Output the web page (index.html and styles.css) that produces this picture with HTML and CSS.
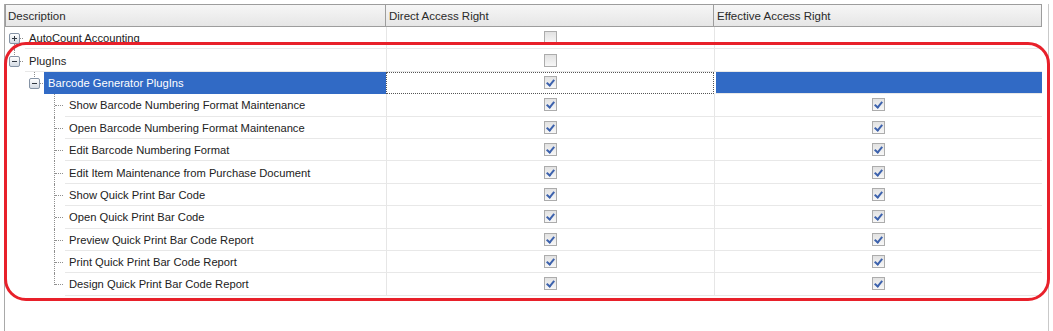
FILE: index.html
```html
<!DOCTYPE html>
<html lang="en">

<head>
  <meta charset="UTF-8">
  <title>Access Right</title>
  <link rel="stylesheet" href="styles.css">
</head>

<body>
  <div class="grid">
    <div class="head">
      <div class="hcell">Description</div>
      <div class="hcell">Direct Access Right</div>
      <div class="hcell">Effective Access Right</div>
    </div>

    <div class="row">
      <div class="desc">
        <span class="slot v-down h"><span class="exp plus"></span></span>
        <span class="label">AutoCount Accounting</span>
      </div>
      <div class="cell"><span class="chk"></span></div>
      <div class="cell"></div>
    </div>

    <div class="row">
      <div class="desc">
        <span class="slot v-up h"><span class="exp"></span></span>
        <span class="label">PlugIns</span>
      </div>
      <div class="cell"><span class="chk"></span></div>
      <div class="cell"></div>
    </div>

    <div class="row selected">
      <div class="desc">
        <span class="slot"></span>
        <span class="slot v-up h"><span class="exp"></span></span>
        <span class="label">Barcode Generator PlugIns</span>
      </div>
      <div class="cell focus"><span class="chk on"></span></div>
      <div class="cell"></div>
    </div>

    <div class="row">
      <div class="desc">
        <span class="slot"></span><span class="slot"></span>
        <span class="slot v-full h"></span>
        <span class="label">Show Barcode Numbering Format Maintenance</span>
      </div>
      <div class="cell"><span class="chk on"></span></div>
      <div class="cell"><span class="chk on"></span></div>
    </div>

    <div class="row">
      <div class="desc">
        <span class="slot"></span><span class="slot"></span>
        <span class="slot v-full h"></span>
        <span class="label">Open Barcode Numbering Format Maintenance</span>
      </div>
      <div class="cell"><span class="chk on"></span></div>
      <div class="cell"><span class="chk on"></span></div>
    </div>

    <div class="row">
      <div class="desc">
        <span class="slot"></span><span class="slot"></span>
        <span class="slot v-full h"></span>
        <span class="label">Edit Barcode Numbering Format</span>
      </div>
      <div class="cell"><span class="chk on"></span></div>
      <div class="cell"><span class="chk on"></span></div>
    </div>

    <div class="row">
      <div class="desc">
        <span class="slot"></span><span class="slot"></span>
        <span class="slot v-full h"></span>
        <span class="label">Edit Item Maintenance from Purchase Document</span>
      </div>
      <div class="cell"><span class="chk on"></span></div>
      <div class="cell"><span class="chk on"></span></div>
    </div>

    <div class="row">
      <div class="desc">
        <span class="slot"></span><span class="slot"></span>
        <span class="slot v-full h"></span>
        <span class="label">Show Quick Print Bar Code</span>
      </div>
      <div class="cell"><span class="chk on"></span></div>
      <div class="cell"><span class="chk on"></span></div>
    </div>

    <div class="row">
      <div class="desc">
        <span class="slot"></span><span class="slot"></span>
        <span class="slot v-full h"></span>
        <span class="label">Open Quick Print Bar Code</span>
      </div>
      <div class="cell"><span class="chk on"></span></div>
      <div class="cell"><span class="chk on"></span></div>
    </div>

    <div class="row">
      <div class="desc">
        <span class="slot"></span><span class="slot"></span>
        <span class="slot v-full h"></span>
        <span class="label">Preview Quick Print Bar Code Report</span>
      </div>
      <div class="cell"><span class="chk on"></span></div>
      <div class="cell"><span class="chk on"></span></div>
    </div>

    <div class="row">
      <div class="desc">
        <span class="slot"></span><span class="slot"></span>
        <span class="slot v-full h"></span>
        <span class="label">Print Quick Print Bar Code Report</span>
      </div>
      <div class="cell"><span class="chk on"></span></div>
      <div class="cell"><span class="chk on"></span></div>
    </div>

    <div class="row">
      <div class="desc">
        <span class="slot"></span><span class="slot"></span>
        <span class="slot v-up h"></span>
        <span class="label">Design Quick Print Bar Code Report</span>
      </div>
      <div class="cell"><span class="chk on"></span></div>
      <div class="cell"><span class="chk on"></span></div>
    </div>

    <div class="highlight"></div>
  </div>
</body>

</html>
```

FILE: styles.css
```css
html,
body {
  margin: 0;
  background-color: #ffffff;
}

body {
  padding: 4px 0 0 4px;
  font-family: 'Liberation Sans', Arial, sans-serif;
  font-size: 11.2px;
  color: #222222;
}

.grid {
  position: relative;
  width: 1040px;
  height: 327px;
  padding-right: 3px;
  border-left: 1px solid #a9a9a9;
  border-right: 1px solid #c9c9c9;
}

.head,
.row {
  display: grid;
  grid-template-columns: 381px 328px 328px;
}

.head {
  height: 23px;
}

.hcell {
  display: flex;
  align-items: center;
  padding-left: 3px;
  border: 1px solid #9d9d9d;
  border-left-width: 0;
  background: linear-gradient(#f6f6f6, #e6e6e6);
  color: #2a2a2a;
  font-size: 11.5px;
}

.hcell:first-child {
  padding-left: 2px;
  border-left-width: 1px;
}

.row {
  height: 22.4px;
}

.desc {
  display: flex;
  min-width: 0;
}

.label {
  flex: 1;
  display: flex;
  align-items: center;
  padding-left: 4px;
  padding-top: 1px;
  border-bottom: 1px solid #e8e8e8;
  white-space: nowrap;
}

.cell {
  display: flex;
  align-items: center;
  justify-content: center;
  border-left: 1px solid #e6e6e6;
  border-bottom: 1px solid #e8e8e8;
}

/* tree lines */
.slot {
  position: relative;
  flex: none;
  width: 20px;
}

.slot::before,
.slot::after {
  content: '';
  position: absolute;
  display: none;
}

.slot.v-down::before,
.slot.v-up::before,
.slot.v-full::before {
  display: block;
  left: 9px;
  width: 0;
  border-left: 1px dotted #8f8f8f;
}

.slot.v-down::before {
  top: 50%;
  bottom: 0;
}

.slot.v-up::before {
  top: 0;
  bottom: 50%;
}

.slot.v-full::before {
  top: 0;
  bottom: 0;
}

.slot.h::after {
  display: block;
  left: 10px;
  right: 2px;
  top: 50%;
  height: 0;
  border-top: 1px dotted #8f8f8f;
}

.exp {
  position: absolute;
  z-index: 1;
  left: 4px;
  top: 50%;
  width: 9px;
  height: 9px;
  margin-top: -5px;
  border: 1px solid #8593a5;
  border-radius: 2px;
  background: linear-gradient(#ffffff, #d3dae3);
}

.exp::before,
.exp.plus::after {
  content: '';
  position: absolute;
  background-color: #2f3640;
}

.exp::before {
  left: 2px;
  top: 4px;
  width: 5px;
  height: 1px;
}

.exp.plus::after {
  left: 4px;
  top: 2px;
  width: 1px;
  height: 5px;
}

/* checkboxes */
.chk {
  position: relative;
  box-sizing: border-box;
  width: 13px;
  height: 13px;
  border: 1px solid #acacac;
  background: linear-gradient(#e2e2e2, #f7f7f7);
}

.chk.on::after {
  content: '';
  position: absolute;
  left: 3px;
  top: 1px;
  width: 3px;
  height: 6px;
  border-right: 2px solid #3d62ad;
  border-bottom: 2px solid #3d62ad;
  transform: rotate(40deg);
}

/* selected row */
.selected .label {
  margin-left: -1px;
  background-color: #316ac5;
  color: #ffffff;
  border-bottom-color: #316ac5;
}

.selected .cell:last-child {
  margin-left: 1px;
  background-color: #316ac5;
  border-left-color: #ffffff;
}

.focus {
  box-sizing: border-box;
  border: 1px dotted #555555;
}

/* annotation drawn over the grid */
.highlight {
  position: absolute;
  left: -1px;
  top: 38px;
  width: 1046px;
  height: 259px;
  box-sizing: border-box;
  border: 3px solid #e8202a;
  border-radius: 22px;
  pointer-events: none;
}
```
